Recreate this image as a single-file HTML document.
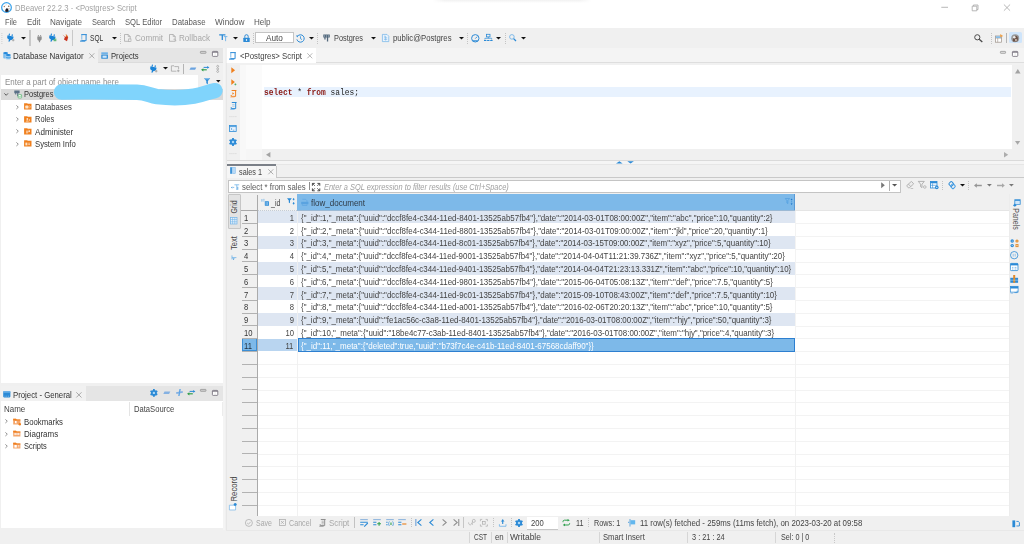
<!DOCTYPE html>
<html lang="en"><head><meta charset="utf-8"><title>DBeaver 22.2.3 - &lt;Postgres&gt; Script</title>
<style>
html,body{margin:0;padding:0}
body{width:1024px;height:544px;overflow:hidden;background:#f0f0f0;position:relative;font-family:"Liberation Sans", sans-serif;font-size:9px;line-height:10px}
body>div,body>svg,body>span{position:absolute}
.t{white-space:pre;transform-origin:0 50%}
svg{overflow:visible}
</style></head>
<body>
<div style="left:0px;top:0px;width:1024px;height:28.2px;background:#fff;"></div>
<div style="left:432px;top:0;width:160px;height:3px;background:linear-gradient(180deg,#f1f1f1,#fff);-webkit-mask-image:linear-gradient(90deg,transparent,#000 8%,#000 92%,transparent);mask-image:linear-gradient(90deg,transparent,#000 8%,#000 92%,transparent)"></div>
<svg style="left:0.9px;top:1.8px" width="11" height="11" viewBox="0 0 11 11"><circle cx="5.500" cy="5.500" r="4.850" fill="#fff" stroke="#3aa2ea" stroke-width="1.250"/><path d="M4.100 9.600C4.300 7.600 4.900 6.300 5.900 6.300C7 6.300 7.600 7.700 7.700 9.600C6.600 10.200 5.200 10.200 4.100 9.600Z" fill="#1d1a24"/><circle cx="3.300" cy="4.500" r=".7" fill="#a0785a"/><circle cx="7.700" cy="4.200" r=".8" fill="#8a6a55"/><circle cx="8" cy="6.700" r=".5" fill="#8a6a55"/><path d="M4.600 3.200l.8-.5" stroke="#b59a86" stroke-width=".6"/></svg>
<span class="t" style="left:14.7px;top:2.6px;color:#a3a3a3;transform:scaleX(0.856);">DBeaver 22.2.3 - &lt;Postgres&gt; Script</span>
<svg style="left:941px;top:4px" width="70" height="8" viewBox="0 0 70 8"><g fill="none" stroke="#a6a6a6" stroke-width=".8"><path d="M.3 3.3H7"/><path d="M31.2 2.2h4.6v4.6h-4.6zM32.4 2.2V1h4.6v4.6h-1.2"/><path d="M62.9.5l6.2 6.2M69.1.5l-6.2 6.2"/></g></svg>
<span class="t" style="left:4.9px;top:16.7px;color:#5a5a5a;transform:scaleX(0.827);">File</span>
<span class="t" style="left:26.5px;top:16.7px;color:#5a5a5a;transform:scaleX(0.870);">Edit</span>
<span class="t" style="left:50px;top:16.7px;color:#5a5a5a;transform:scaleX(0.901);">Navigate</span>
<span class="t" style="left:91.5px;top:16.7px;color:#5a5a5a;transform:scaleX(0.824);">Search</span>
<span class="t" style="left:124.75px;top:16.7px;color:#5a5a5a;transform:scaleX(0.850);">SQL Editor</span>
<span class="t" style="left:171.9px;top:16.7px;color:#5a5a5a;transform:scaleX(0.869);">Database</span>
<span class="t" style="left:215px;top:16.7px;color:#5a5a5a;transform:scaleX(0.918);">Window</span>
<span class="t" style="left:254px;top:16.7px;color:#5a5a5a;transform:scaleX(0.897);">Help</span>
<div style="left:0.8px;top:33px;width:0;height:10.5px;border-left:1px dotted #dcdcdc"></div>
<div style="left:2.2px;top:33px;width:0;height:10.5px;border-left:1px dotted #e4e4e4"></div>
<svg style="left:7.2px;top:33.8px" width="7.2" height="8" viewBox="0 0 7.2 8"><g transform="rotate(14 3.4 4)"><path d="M1.500 0V2M4.500 0V2" stroke="#1b84d8" stroke-width="1.100"/><path d="M0 1.900H6.200V3.500C6.200 4.800 5.100 5.600 4 5.900L3.300 8H2.300L2.400 5.900C1.100 5.600 0 4.800 0 3.500Z" fill="#1b84d8"/></g><path d="M4.900 6.100H7.500M6.200 4.800V7.400" stroke="#9a9a9a" stroke-width=".8"/></svg>
<svg style="left:21.1px;top:36.8px" width="5.0" height="2.6" viewBox="0 0 5.0 2.6"><path d="M0 0H5.0L2.5 2.6Z" fill="#111"/></svg>
<div style="left:29.4px;top:30.3px;width:1.3px;height:15.3px;background:#c9c9c9;"></div>
<svg style="left:37.3px;top:34.6px" width="5" height="7.2" viewBox="0 0 5 7.2"><path d="M1.4 0v1.5M3.6 0v1.5" stroke="#8e8e8e" stroke-width=".9"/><path d="M.3 1.5h4.4v2.2c0 1.1-.8 1.9-1.6 2v1.5H1.9V5.7C1 5.6.3 4.8.3 3.7Z" fill="#8e8e8e"/></svg>
<svg style="left:48.8px;top:33.8px" width="7.2" height="8" viewBox="0 0 7.2 8"><g transform="rotate(14 3.4 4)"><path d="M1.500 0V2M4.500 0V2" stroke="#1b84d8" stroke-width="1.100"/><path d="M0 1.900H6.200V3.500C6.200 4.800 5.100 5.600 4 5.900L3.300 8H2.300L2.400 5.900C1.100 5.600 0 4.800 0 3.500Z" fill="#1b84d8"/></g><path d="M4.600 5.200H7.400M4.600 6.700H7.400" stroke="#2fa04e" stroke-width=".9"/></svg>
<svg style="left:61.8px;top:34.4px" width="6.6" height="7.4" viewBox="0 0 6.6 7.4"><path d="M.4.6l2.500 2.500L2 5.400 5 7.200 6.200 3.300 4.600.2 3.600 2.900Z" fill="#c8321e"/><path d="M3.800.6l1.700 2.600" stroke="#f0a030" stroke-width=".8"/></svg>
<div style="left:71.9px;top:30.3px;width:1.3px;height:15.3px;background:#c9c9c9;"></div>
<svg style="left:80px;top:34px" width="7.4" height="7.8" viewBox="0 0 7.4 7.8"><path d="M1.800 .500V5.600" stroke="#6fb2e8" stroke-width=".9"/><path d="M1.300.600H6.800M6.100.600V6.700H1.400" fill="none" stroke="#2b8ad6" stroke-width="1"/><path d="M0 7.100H5" stroke="#2b8ad6" stroke-width="1"/></svg>
<span class="t" style="left:90.25px;top:33.2px;color:#333;transform:scaleX(0.735);">SQL</span>
<svg style="left:111.9px;top:36.8px" width="5.0" height="2.6" viewBox="0 0 5.0 2.6"><path d="M0 0H5.0L2.5 2.6Z" fill="#111"/></svg>
<div style="left:120.2px;top:33px;width:0;height:10.5px;border-left:1px dotted #c4c4c4"></div>
<svg style="left:124.4px;top:34.2px" width="8" height="7.8" viewBox="0 0 8 7.8"><path d="M.5.5H4.200L6.200 2.500V7.300H.5Z" fill="none" stroke="#a9a9a9" stroke-width=".8"/><path d="M4.200.5V2.500H6.200" fill="none" stroke="#a9a9a9" stroke-width=".7"/><rect x="4.600" y="5" width="2.400" height="2.600" fill="#f0f0f0" stroke="#a9a9a9" stroke-width=".6"/></svg>
<span class="t" style="left:134.75px;top:33.2px;color:#a8a8a8;transform:scaleX(0.903);">Commit</span>
<svg style="left:169.4px;top:34.2px" width="8" height="7.8" viewBox="0 0 8 7.8"><path d="M.5.5H4.200L6.200 2.500V7.300H.5Z" fill="none" stroke="#a9a9a9" stroke-width=".8"/><path d="M4.200.5V2.500H6.200" fill="none" stroke="#a9a9a9" stroke-width=".7"/><path d="M4.400 5.300c1.400-.6 2.600.3 2.400 1.900" fill="none" stroke="#a9a9a9" stroke-width=".7"/></svg>
<span class="t" style="left:178.75px;top:33.2px;color:#a8a8a8;transform:scaleX(0.898);">Rollback</span>
<svg style="left:218.6px;top:34.3px" width="8.6" height="7.6" viewBox="0 0 8.6 7.6"><path d="M.2.800H6.400M3.300.800V6" stroke="#2b8ad6" stroke-width="1.300"/><path d="M4.800 2.600H8.400M6.600 2.600V7.200" stroke="#6fb2e8" stroke-width=".9"/></svg>
<svg style="left:232.5px;top:36.8px" width="5.0" height="2.6" viewBox="0 0 5.0 2.6"><path d="M0 0H5.0L2.5 2.6Z" fill="#111"/></svg>
<svg style="left:243px;top:33.6px" width="7" height="8.4" viewBox="0 0 7 8.4"><path d="M1.800 3.800V2.400a1.700 1.700 0 0 1 3.400 0V3.800" fill="none" stroke="#2b8ad6" stroke-width="1"/><rect x=".3" y="3.700" width="6.400" height="4.400" rx=".6" fill="#2b8ad6"/><rect x="2.900" y="5.200" width="1.200" height="1.600" fill="#fff"/></svg>
<div style="left:253.2px;top:33px;width:0;height:10.5px;border-left:1px dotted #c4c4c4"></div>
<div style="left:255.3px;top:32.3px;width:38.5px;height:11.2px;background:#fff;border:.8px solid #c4c4c4;box-sizing:border-box"></div>
<span class="t" style="left:266.25px;top:33.2px;color:#444;transform:scaleX(0.910);">Auto</span>
<svg style="left:296.4px;top:33.8px" width="8.6" height="8.6" viewBox="0 0 8.6 8.6"><path d="M1.500 2.300A3.700 3.700 0 1 1 .9 5.400" fill="none" stroke="#2b8ad6" stroke-width="1"/><path d="M0 1.400l2.400.1L1.300 3.600Z" fill="#2b8ad6"/><path d="M4.500 2.300V4.600L6 5.600" fill="none" stroke="#2b8ad6" stroke-width=".8"/></svg>
<svg style="left:308.7px;top:36.8px" width="5.0" height="2.6" viewBox="0 0 5.0 2.6"><path d="M0 0H5.0L2.5 2.6Z" fill="#111"/></svg>
<div style="left:317.2px;top:33px;width:0;height:10.5px;border-left:1px dotted #c4c4c4"></div>
<svg style="left:323.4px;top:34px" width="7.2" height="8" viewBox="0 0 7.2 8"><path d="M.3.400H6.800V3.600H5.200V7.600H3.900V3.600H2.600V5.400H1.300V3.600H.3Z" fill="#53687c"/><path d="M1.500 1.200v1.600M3.500 1.200v1.600M5.500 1.200v1.600" stroke="#c9d6e2" stroke-width=".5"/></svg>
<span class="t" style="left:333.75px;top:33.2px;color:#444;transform:scaleX(0.816);">Postgres</span>
<svg style="left:370.6px;top:36.8px" width="5.0" height="2.6" viewBox="0 0 5.0 2.6"><path d="M0 0H5.0L2.5 2.6Z" fill="#111"/></svg>
<svg style="left:382.4px;top:34px" width="7.2" height="8" viewBox="0 0 7.2 8"><path d="M.4.400H5L6.800 2.200V7.600H.4Z" fill="#eaf3fc" stroke="#6fb2e8" stroke-width=".7"/><path d="M2 2.200h1.600M2 3.800h3.200M2 5.400h3.200M3.600 2.200v4.400" stroke="#6fb2e8" stroke-width=".6"/></svg>
<span class="t" style="left:392.75px;top:33.2px;color:#444;transform:scaleX(0.858);">public@Postgres</span>
<svg style="left:459.0px;top:36.8px" width="5.0" height="2.6" viewBox="0 0 5.0 2.6"><path d="M0 0H5.0L2.5 2.6Z" fill="#111"/></svg>
<div style="left:467.2px;top:33px;width:0;height:10.5px;border-left:1px dotted #c4c4c4"></div>
<svg style="left:471px;top:34px" width="8.6" height="8.4" viewBox="0 0 8.6 8.4"><circle cx="4.300" cy="4.300" r="3.700" fill="none" stroke="#2b8ad6" stroke-width="1"/><path d="M4.300 4.600L6.200 2.600" stroke="#2b8ad6" stroke-width=".9"/><path d="M1.800 6.800H6.800" stroke="#2b8ad6" stroke-width="1"/></svg>
<svg style="left:483.6px;top:34.3px" width="8.6" height="7.2" viewBox="0 0 8.6 7.2"><rect x="2.600" y=".3" width="3.400" height="2.600" fill="none" stroke="#2b8ad6" stroke-width=".8"/><path d="M4.300 2.900V4.300M.9 5.600V4.300H7.700V5.600" fill="none" stroke="#2b8ad6" stroke-width=".7"/><path d="M0 6.500H2.400M3.100 6.500H5.500M6.200 6.500H8.600" stroke="#2b8ad6" stroke-width="1.100"/></svg>
<svg style="left:496.4px;top:36.8px" width="5.0" height="2.6" viewBox="0 0 5.0 2.6"><path d="M0 0H5.0L2.5 2.6Z" fill="#111"/></svg>
<div style="left:505px;top:33px;width:0;height:10.5px;border-left:1px dotted #c4c4c4"></div>
<svg style="left:509.3px;top:34.2px" width="7.6" height="7.6" viewBox="0 0 7.6 7.6"><circle cx="2.900" cy="2.900" r="2.300" fill="none" stroke="#6fb2e8" stroke-width=".9"/><path d="M4.600 4.600L7 7" stroke="#2b8ad6" stroke-width="1.300"/></svg>
<svg style="left:521.4px;top:36.8px" width="5.0" height="2.6" viewBox="0 0 5.0 2.6"><path d="M0 0H5.0L2.5 2.6Z" fill="#111"/></svg>
<svg style="left:974px;top:33.8px" width="9" height="8.6" viewBox="0 0 9 8.6"><circle cx="3.300" cy="3.300" r="2.600" fill="none" stroke="#4a4a4a" stroke-width="1"/><path d="M5.200 5.200L8.300 8.100" stroke="#4a4a4a" stroke-width="1.300"/></svg>
<div style="left:991.2px;top:33px;width:0;height:10.5px;border-left:1px dotted #c4c4c4"></div>
<svg style="left:995px;top:33.6px" width="8.4" height="8.6" viewBox="0 0 8.4 8.6"><rect x=".4" y="2" width="6.200" height="6.200" fill="#fff" stroke="#9a8f86" stroke-width=".7"/><path d="M.4 4.100H6.600M2.700 4.100V8.200" stroke="#9a8f86" stroke-width=".6"/><rect x=".8" y="2.400" width="5.400" height="1.400" fill="#6fb2e8"/><path d="M5.200 0l3 2-3 1.500Z" fill="#f0a24a"/></svg>
<div style="left:1006.1px;top:33px;width:1.0px;height:10px;background:#b4b4b4;"></div>
<div style="left:1009.1px;top:32.3px;width:12.6px;height:10.9px;background:#cfe5fb;border-radius:1.500px"></div>
<svg style="left:1011.3px;top:33.8px" width="8.4" height="8.4" viewBox="0 0 8.4 8.4"><circle cx="4.200" cy="4.200" r="4" fill="#9a9a9a"/><path d="M2 7.400C1.600 5 2.300 2 4.400 1.800c1.900-.1 2.700 1.600 2.500 3.100-.1 1.100-.4 1.800-.7 2.600Z" fill="#6a5248"/><circle cx="3.300" cy="3.300" r="1.300" fill="#e9e9e9"/><path d="M4.100 5.200h1.700v1.500h-1.700z" fill="#e4d9cf"/></svg>
<div style="left:0.8px;top:47.5px;width:222.6px;height:335.1px;background:#f0f0f0;"></div>
<div style="left:98px;top:47.8px;width:125.2px;height:14.5px;background:#e5e5e5;border-top-left-radius:3px"></div>
<div style="left:98px;top:62px;width:125.2px;height:0.6px;background:#dcdcdc;"></div>
<svg style="left:3px;top:51.6px" width="8" height="7.6" viewBox="0 0 8 7.6"><g><rect x=".2" y="1" width="4.800" height="5.400" rx="1" fill="#7dbdee"/><ellipse cx="2.600" cy="1.100" rx="2.400" ry="1" fill="#1f86da"/><rect x="2.800" y="2.900" width="5" height="4.500" rx="1" fill="#8cc6f0" stroke="#f0f0f0" stroke-width=".4"/><ellipse cx="5.300" cy="3" rx="2.500" ry="1" fill="#1f86da"/><path d="M2.800 5.300C4 6 6.600 6 7.800 5.300" fill="none" stroke="#1f86da" stroke-width=".6"/></g></svg>
<span class="t" style="left:13.1px;top:50.6px;color:#333;transform:scaleX(0.888);">Database Navigator</span>
<svg style="left:88.8px;top:52.8px" width="5.6" height="5.6" viewBox="0 0 5.6 5.6"><path d="M.3.300L5.300 5.300M5.300.300L.3 5.300" stroke="#909090" stroke-width=".7"/></svg>
<svg style="left:100.6px;top:51.9px" width="7.2" height="7" viewBox="0 0 7.2 7"><rect x=".3" y=".3" width="6.600" height="1.700" fill="#6fb2e8"/><rect x=".3" y="2.500" width="6.600" height="4.200" fill="#2b8ad6"/><rect x="1.500" y="3.600" width="4.200" height="2.200" fill="#cfe6fa"/></svg>
<span class="t" style="left:110.6px;top:50.6px;color:#333;transform:scaleX(0.852);">Projects</span>
<svg style="left:200px;top:51.2px" width="6.4" height="3" viewBox="0 0 6.4 3"><rect x=".4" y=".4" width="5.600" height="1.900" rx=".5" fill="#d8d8d8" stroke="#8a8a8a" stroke-width=".7"/></svg>
<svg style="left:212.4px;top:51px" width="6.2" height="5.8" viewBox="0 0 6.2 5.8"><rect x=".4" y=".4" width="5.400" height="5" rx=".8" fill="#fff" stroke="#6b6672" stroke-width=".8"/><path d="M.4 1.300H5.800" stroke="#6b6672" stroke-width=".8"/><path d="M3.100 1.700V5.400" stroke="#d8d8d8" stroke-width=".5"/></svg>
<svg style="left:150.2px;top:64.6px" width="7.2" height="8" viewBox="0 0 7.2 8"><g transform="rotate(14 3.4 4)"><path d="M1.500 0V2M4.500 0V2" stroke="#1b84d8" stroke-width="1.100"/><path d="M0 1.900H6.200V3.500C6.200 4.800 5.100 5.600 4 5.900L3.300 8H2.300L2.400 5.900C1.100 5.600 0 4.800 0 3.500Z" fill="#1b84d8"/></g><path d="M4.900 6.100H7.500M6.200 4.800V7.400" stroke="#9a9a9a" stroke-width=".8"/></svg>
<svg style="left:162.5px;top:67.3px" width="5.0" height="2.6" viewBox="0 0 5.0 2.6"><path d="M0 0H5.0L2.5 2.6Z" fill="#111"/></svg>
<svg style="left:171.2px;top:65px" width="9" height="7" viewBox="0 0 9 7"><path d="M.4 6.200V.800H3L3.800 1.600H7.600V4" fill="none" stroke="#9c9c9c" stroke-width=".7"/><path d="M.4 6.200H5.400" stroke="#9c9c9c" stroke-width=".7"/><path d="M6 5.800H8.600M7.300 4.500V7.100" stroke="#9c9c9c" stroke-width=".7"/></svg>
<div style="left:183.3px;top:64px;width:1.0px;height:9.5px;background:#b4b4b4;"></div>
<svg style="left:188.7px;top:66.6px" width="7.6" height="3.2" viewBox="0 0 7.6 3.2"><path d="M.5 2.800L1.700.400H7.300L6.100 2.800Z" fill="#6aa3e0"/></svg>
<svg style="left:200.6px;top:66.2px" width="8.4" height="5.2" viewBox="0 0 8.4 5.2"><path d="M2.600 1.400H7.200" stroke="#2b8ad6" stroke-width="1"/><path d="M6.200 0L8.400 1.400 6.200 2.800Z" fill="#2b8ad6"/><path d="M1.200 3.800H5.800" stroke="#36a04e" stroke-width="1.200"/><path d="M2.400 2.200L0 3.800 2.400 5.400Z" fill="#36a04e"/></svg>
<svg style="left:215.6px;top:65.3px" width="3.4" height="7.8" viewBox="0 0 3.4 7.8"><g fill="#fff" stroke="#8a8a8a" stroke-width=".6"><circle cx="1.700" cy="1.300" r=".95"/><circle cx="1.700" cy="3.900" r=".95"/><circle cx="1.700" cy="6.500" r=".95"/></g></svg>
<div style="left:1.1px;top:75px;width:196.5px;height:13.6px;background:#fff;"></div>
<div style="left:1.8px;top:88.5px;width:198.2px;height:0.6px;background:#b3b3b3;"></div>
<span class="t" style="left:4.6px;top:76.6px;color:#8c8c8c;transform:scaleX(0.882);">Enter a part of object name here</span>
<svg style="left:203.7px;top:77.9px" width="6.4" height="6.4" viewBox="0 0 6.4 6.4"><path d="M0 .2H6.200L3.900 3V6.200L2.300 5.200V3Z" fill="#2b8ad6"/><path d="M1 .9H5.200" stroke="#bfe0f8" stroke-width=".6"/></svg>
<svg style="left:216.1px;top:80.4px" width="4.6" height="2.4" viewBox="0 0 4.6 2.4"><path d="M0 0H4.6L2.3 2.4Z" fill="#111"/></svg>
<div style="left:0.8px;top:88.9px;width:222.6px;height:11.0px;background:#d9d9d9;"></div>
<div style="left:0.8px;top:99.9px;width:222.6px;height:282.7px;background:#fff;"></div>
<svg style="left:4.2px;top:93px" width="4.4" height="3" viewBox="0 0 4.4 3"><path d="M.4.400L2.200 2.300 4 .4" fill="none" stroke="#4a4a4a" stroke-width=".9"/></svg>
<svg style="left:13.7px;top:90.4px" width="7.8" height="8.4" viewBox="0 0 7.8 8.4"><path d="M.3.400H5.600V3.200H4.300V6.200H3.200V3.200H2.200V4.600H1.200V3.200H.3Z" fill="#5a7087"/><rect x="4.200" y="4.600" width="3.400" height="3.400" rx=".5" fill="#fff" stroke="#3aa655" stroke-width=".6"/><path d="M4.900 6.300l.8.800 1.300-1.600" fill="none" stroke="#3aa655" stroke-width=".6"/></svg>
<span class="t" style="left:24px;top:89.4px;color:#333;transform:scaleX(0.830);">Postgres</span>
<svg style="left:0px;top:0px" width="230" height="110" viewBox="0 0 230 110"><path d="M61.500 92C85 91.700 115 91.900 137 92.300C146 92.600 150 95.600 157 96.600C167 97.800 183 98 194 96.200C203 94.800 208 91.800 215 90.600" fill="none" stroke="#80d4fc" stroke-width="15.400" stroke-linecap="round" stroke-linejoin="round"/></svg>
<svg style="left:16.2px;top:104.8px" width="2.8" height="4.4" viewBox="0 0 2.8 4.4"><path d="M.4.400L2.300 2.200.4 4" fill="none" stroke="#858585" stroke-width=".9"/></svg>
<svg style="left:24px;top:103.4px" width="7.6" height="6.8" viewBox="0 0 7.6 6.8"><path d="M.1.200H3.200L3.800.800H7.500V6.500H.1Z" fill="#f0801e"/><rect x="1.300" y="2.600" width="3.200" height="2.900" rx=".6" fill="#fde3c8"/><path d="M5.300 2.800L6.500 3.900 5.300 5" fill="none" stroke="#fff" stroke-width=".6"/></svg>
<span class="t" style="left:34.75px;top:102.0px;color:#333;transform:scaleX(0.856);">Databases</span>
<svg style="left:16.2px;top:117.05px" width="2.8" height="4.4" viewBox="0 0 2.8 4.4"><path d="M.4.400L2.300 2.200.4 4" fill="none" stroke="#858585" stroke-width=".9"/></svg>
<svg style="left:24px;top:115.65px" width="7.6" height="6.8" viewBox="0 0 7.6 6.8"><path d="M.1.200H3.200L3.800.800H7.500V6.500H.1Z" fill="#f0801e"/><circle cx="3.300" cy="3" r=".9" fill="#fde3c8"/><path d="M1.700 5.600c.2-1.600 3-1.600 3.200 0Z" fill="#fde3c8"/><path d="M5.400 3v2.200" stroke="#fff" stroke-width=".5"/></svg>
<span class="t" style="left:34.75px;top:114.25px;color:#333;transform:scaleX(0.832);">Roles</span>
<svg style="left:16.2px;top:129.3px" width="2.8" height="4.4" viewBox="0 0 2.8 4.4"><path d="M.4.400L2.300 2.200.4 4" fill="none" stroke="#858585" stroke-width=".9"/></svg>
<svg style="left:24px;top:127.9px" width="7.6" height="6.8" viewBox="0 0 7.6 6.8"><path d="M.1.200H3.200L3.800.800H7.500V6.500H.1Z" fill="#f0801e"/><path d="M2 3.200H5.400M2 4.800H4M4.800 2.200L6 3.200 4.800 4.200" fill="none" stroke="#fff" stroke-width=".7"/></svg>
<span class="t" style="left:34.75px;top:126.5px;color:#333;transform:scaleX(0.900);">Administer</span>
<svg style="left:16.2px;top:141.55px" width="2.8" height="4.4" viewBox="0 0 2.8 4.4"><path d="M.4.400L2.300 2.200.4 4" fill="none" stroke="#858585" stroke-width=".9"/></svg>
<svg style="left:24px;top:140.15px" width="7.6" height="6.8" viewBox="0 0 7.6 6.8"><path d="M.1.200H3.200L3.800.800H7.500V6.500H.1Z" fill="#f0801e"/><rect x="1.400" y="2.600" width="2" height="2.800" fill="#fde3c8"/><path d="M4.200 3.200H6M4.200 4.600H6" stroke="#fff" stroke-width=".6"/></svg>
<span class="t" style="left:34.75px;top:138.75px;color:#333;transform:scaleX(0.857);">System Info</span>
<div style="left:0.8px;top:385.7px;width:222.6px;height:142.7px;background:#fff;"></div>
<div style="left:0.8px;top:385.7px;width:222.6px;height:15.6px;background:#e5e5e5;"></div>
<div style="left:0.8px;top:385.7px;width:85.2px;height:15.6px;background:#f1f1f1;"></div>
<svg style="left:3.1px;top:390.6px" width="7.6" height="6.6" viewBox="0 0 7.6 6.6"><rect x=".2" y=".2" width="7.200" height="6.200" rx=".8" fill="#2b8ad6"/><rect x=".2" y=".2" width="7.200" height="1.500" fill="#6fb2e8"/><path d="M1.600 5.200h.8M3.400 5.200h.8M5.200 5.200h.8" stroke="#cfe6fa" stroke-width=".6"/></svg>
<span class="t" style="left:13.4px;top:389.9px;color:#333;transform:scaleX(0.865);">Project - General</span>
<svg style="left:76.4px;top:391.6px" width="5.8" height="5.8" viewBox="0 0 5.8 5.8"><path d="M.3.300L5.500 5.500M5.500.300L.3 5.500" stroke="#8a8a8a" stroke-width=".7"/></svg>
<svg style="left:150.1px;top:388.6px" width="7.8" height="7.8" viewBox="0 0 8 8"><g transform="translate(4 4)" fill="#2b8ad6"><rect x="-.9" y="-4" width="1.800" height="2" transform="rotate(0)"/><rect x="-.9" y="-4" width="1.800" height="2" transform="rotate(60)"/><rect x="-.9" y="-4" width="1.800" height="2" transform="rotate(120)"/><rect x="-.9" y="-4" width="1.800" height="2" transform="rotate(180)"/><rect x="-.9" y="-4" width="1.800" height="2" transform="rotate(240)"/><rect x="-.9" y="-4" width="1.800" height="2" transform="rotate(300)"/><circle r="3"/></g><circle cx="4" cy="4" r="1.250" fill="#a9d6f7"/></svg>
<svg style="left:163px;top:391px" width="7.6" height="3.2" viewBox="0 0 7.6 3.2"><path d="M.3 2.900L1.500.400H7.300L6.100 2.900Z" fill="#85b1e2"/></svg>
<svg style="left:176px;top:389px" width="7" height="7" viewBox="0 0 7 7"><path d="M.2 4.200L6.800 2.800" stroke="#85b1e2" stroke-width="1.700"/><path d="M4.100 0L2.900 7" stroke="#5fa5e6" stroke-width="1.400"/></svg>
<svg style="left:187px;top:389.8px" width="8.4" height="5.2" viewBox="0 0 8.4 5.2"><path d="M2.600 1.400H7.200" stroke="#2b8ad6" stroke-width="1"/><path d="M6.200 0L8.400 1.400 6.200 2.800Z" fill="#2b8ad6"/><path d="M1.200 3.800H5.800" stroke="#36a04e" stroke-width="1.200"/><path d="M2.400 2.200L0 3.800 2.400 5.400Z" fill="#36a04e"/></svg>
<svg style="left:200px;top:389.2px" width="6.4" height="3" viewBox="0 0 6.4 3"><rect x=".4" y=".4" width="5.600" height="1.900" rx=".5" fill="#d0d0d0" stroke="#8a8a8a" stroke-width=".7"/></svg>
<svg style="left:212.4px;top:389.6px" width="6.2" height="5.8" viewBox="0 0 6.2 5.8"><rect x=".4" y=".4" width="5.400" height="5" rx=".8" fill="#fff" stroke="#6b6672" stroke-width=".8"/><path d="M.4 1.300H5.800" stroke="#6b6672" stroke-width=".8"/><path d="M3.100 1.700V5.400" stroke="#d8d8d8" stroke-width=".5"/></svg>
<span class="t" style="left:3.75px;top:404.0px;color:#444;transform:scaleX(0.885);">Name</span>
<div style="left:129.4px;top:401.5px;width:1.0px;height:14.0px;background:#e4e4e4;"></div>
<div style="left:221.5px;top:401.5px;width:1.0px;height:14.0px;background:#ececec;"></div>
<span class="t" style="left:133.75px;top:404.0px;color:#444;transform:scaleX(0.847);">DataSource</span>
<svg style="left:4.6px;top:419.3px" width="2.8" height="4.4" viewBox="0 0 2.8 4.4"><path d="M.4.400L2.300 2.200.4 4" fill="none" stroke="#858585" stroke-width=".9"/></svg>
<svg style="left:12.5px;top:417.6px" width="8.2" height="7.6" viewBox="0 0 8.2 7.6"><path d="M.2.800H3L3.700 1.600H7.400V6.600H.2Z" fill="#f4a56a"/><path d="M.2.800H3L3.700 1.600H7.400V2.400H.2Z" fill="#f0801e"/><path d="M2 3h1.600v2.600l-.8-.6-.8.600Z" fill="#fff"/><circle cx="6.800" cy="6.300" r="1.200" fill="#f0801e"/></svg>
<span class="t" style="left:24px;top:416.5px;color:#333;transform:scaleX(0.866);">Bookmarks</span>
<svg style="left:4.6px;top:431.55px" width="2.8" height="4.4" viewBox="0 0 2.8 4.4"><path d="M.4.400L2.300 2.200.4 4" fill="none" stroke="#858585" stroke-width=".9"/></svg>
<svg style="left:12.5px;top:429.85px" width="8.2" height="7.6" viewBox="0 0 8.2 7.6"><path d="M.2.800H3L3.700 1.600H7.400V6.600H.2Z" fill="#f4a56a"/><path d="M.2.800H3L3.700 1.600H7.400V2.400H.2Z" fill="#f0801e"/><path d="M1.600 3.400h1.800v1.200H1.600zM4.600 3.400h1.600v1.200H4.600zM3.400 4h1.200" fill="#fff" stroke="#fff" stroke-width=".4"/></svg>
<span class="t" style="left:24px;top:428.75px;color:#333;transform:scaleX(0.888);">Diagrams</span>
<svg style="left:4.6px;top:443.8px" width="2.8" height="4.4" viewBox="0 0 2.8 4.4"><path d="M.4.400L2.300 2.200.4 4" fill="none" stroke="#858585" stroke-width=".9"/></svg>
<svg style="left:12.5px;top:442.1px" width="8.2" height="7.6" viewBox="0 0 8.2 7.6"><path d="M.2.800H3L3.700 1.600H7.400V6.600H.2Z" fill="#f4a56a"/><path d="M.2.800H3L3.700 1.600H7.400V2.400H.2Z" fill="#f0801e"/><rect x="1.400" y="3" width="2.400" height="2.600" fill="#fff"/><path d="M4.800 3.600H6.400M4.800 4.800H6.400" stroke="#fff" stroke-width=".6"/></svg>
<span class="t" style="left:24px;top:441.0px;color:#333;transform:scaleX(0.829);">Scripts</span>
<div style="left:226.9px;top:47.5px;width:797.1px;height:14.5px;background:#f4f4f4;"></div>
<div style="left:226.9px;top:61.8px;width:797.1px;height:0.8px;background:#dedede;"></div>
<div style="left:226.9px;top:62.6px;width:797.1px;height:2.7px;background:#f1f1f1;"></div>
<div style="left:223.2px;top:47.5px;width:1.6px;height:482.5px;background:#f4f4f4;"></div>
<div style="left:226.2px;top:62.6px;width:0.7px;height:467.4px;background:#e7e7e7;"></div>
<div style="left:226.9px;top:47.8px;width:88.7px;height:14.9px;background:#fff;"></div>
<svg style="left:229.3px;top:51.6px" width="7.4" height="7.8" viewBox="0 0 7.4 7.8"><path d="M1.800 .500V5.600" stroke="#6fb2e8" stroke-width=".9"/><path d="M1.300.600H6.800M6.100.600V6.700H1.400" fill="none" stroke="#2b8ad6" stroke-width="1"/><path d="M0 7.100H5" stroke="#2b8ad6" stroke-width="1"/></svg>
<span class="t" style="left:239.5px;top:50.6px;color:#444;transform:scaleX(0.867);">&lt;Postgres&gt; Script</span>
<svg style="left:306.5px;top:52.8px" width="5.6" height="5.6" viewBox="0 0 5.6 5.6"><path d="M.3.300L5.300 5.300M5.300.300L.3 5.300" stroke="#9a9a9a" stroke-width=".7"/></svg>
<svg style="left:1000.4px;top:51.2px" width="6.4" height="3" viewBox="0 0 6.4 3"><rect x=".4" y=".4" width="5.200" height="1.900" rx=".5" fill="#e4e4e4" stroke="#8a8a8a" stroke-width=".7"/></svg>
<svg style="left:1012.2px;top:51px" width="6.2" height="5.8" viewBox="0 0 6.2 5.8"><rect x=".4" y=".4" width="5.400" height="5" rx=".8" fill="#fff" stroke="#6b6672" stroke-width=".8"/><path d="M.4 1.300H5.800" stroke="#6b6672" stroke-width=".8"/><path d="M3.100 1.700V5.400" stroke="#d8d8d8" stroke-width=".5"/></svg>
<div style="left:226.9px;top:65.3px;width:13.1px;height:95.1px;background:#f0f0f0;"></div>
<div style="left:240px;top:65.3px;width:5.8px;height:95.1px;background:#f8f8f8;"></div>
<div style="left:245.8px;top:65.3px;width:766.5px;height:83.7px;background:#fff;"></div>
<div style="left:245.8px;top:149px;width:16.7px;height:11.4px;background:#f6f6f6;"></div>
<div style="left:245.8px;top:65.3px;width:16.6px;height:83.7px;background:#fbfbfb;"></div>
<div style="left:263.75px;top:87px;width:747.55px;height:10.3px;background:#e8f2fe;"></div>
<span class="t" style="left:264px;top:88.25px;color:#222;font-size:8.6px;font-family:'Liberation Mono', monospace;transform:scaleX(0.920);"><b style="color:#8a1a14">select</b> * <b style="color:#8a1a14">from</b> sales;</span>
<svg style="left:231px;top:67.2px" width="4.4" height="6.4" viewBox="0 0 4.4 6.4"><path d="M.3.200L4.100 3.200.3 6.200Z" fill="#f0801e"/></svg>
<svg style="left:231px;top:79px" width="5.4" height="6.6" viewBox="0 0 5.4 6.6"><path d="M.3.200L3.900 3.100.3 6Z" fill="#f0801e"/><path d="M3.400 5.400H5.400M4.400 4.400V6.400" stroke="#3aa655" stroke-width=".7"/></svg>
<svg style="left:229.7px;top:90px" width="7" height="7.6" viewBox="0 0 7 7.6"><path d="M1.600.5H6.400M5.600.5V6.400H1.200M1.200 6.400V5" fill="none" stroke="#f0801e" stroke-width="1"/><path d="M.3 7.100H4.600" stroke="#f6b27a" stroke-width=".8"/><path d="M2.400 2.200L4.200 3.500 2.400 4.800Z" fill="#f0801e"/></svg>
<svg style="left:229.7px;top:101.6px" width="7" height="8.2" viewBox="0 0 7 8.2"><path d="M1.800.5H6.600M5.700.5V6.600H1.200M1.200 6.600V5.200" fill="none" stroke="#2b8ad6" stroke-width="1"/><path d="M.3 7.400H4.600" stroke="#6fb2e8" stroke-width=".8"/><path d="M2.200 2.600h2.400M2.200 4.200h2.400" stroke="#6fb2e8" stroke-width=".6"/></svg>
<svg style="left:229px;top:116.4px" width="8" height="1.2" viewBox="0 0 8 1.2"><path d="M.6.600h.7M2.600.600h.7M4.600.600h.7M6.600.600h.7" stroke="#b8b8b8" stroke-width=".7"/></svg>
<svg style="left:229.4px;top:125px" width="7.6" height="7" viewBox="0 0 7.6 7"><rect x=".4" y=".4" width="6.800" height="6.200" fill="#eaf3fc" stroke="#2b8ad6" stroke-width=".8"/><path d="M.4 1.600H7.200" stroke="#2b8ad6" stroke-width=".8"/><path d="M1.800 3l1.300 1-1.300 1M3.800 5.200h1.600" fill="none" stroke="#2b8ad6" stroke-width=".6"/></svg>
<svg style="left:229px;top:137.8px" width="8" height="8" viewBox="0 0 8 8"><g transform="translate(4 4)" fill="#2b8ad6"><rect x="-.9" y="-4" width="1.800" height="2" transform="rotate(0)"/><rect x="-.9" y="-4" width="1.800" height="2" transform="rotate(60)"/><rect x="-.9" y="-4" width="1.800" height="2" transform="rotate(120)"/><rect x="-.9" y="-4" width="1.800" height="2" transform="rotate(180)"/><rect x="-.9" y="-4" width="1.800" height="2" transform="rotate(240)"/><rect x="-.9" y="-4" width="1.800" height="2" transform="rotate(300)"/><circle r="3"/></g><circle cx="4" cy="4" r="1.250" fill="#a9d6f7"/></svg>
<svg style="left:229px;top:152.6px" width="8" height="1.2" viewBox="0 0 8 1.2"><path d="M.6.600h.7M2.600.600h.7M4.600.600h.7M6.600.600h.7" stroke="#b8b8b8" stroke-width=".7"/></svg>
<svg style="left:1014.7px;top:68.5px" width="5.6" height="4.4" viewBox="0 0 5.6 4.4"><path d="M2.800 0L5.600 4.400H0Z" fill="#a3a3a3"/></svg>
<svg style="left:1014.9px;top:141.4px" width="5.2" height="3.8" viewBox="0 0 5.2 3.8"><path d="M0 0H5.200L2.600 3.800Z" fill="#a8a8a8"/></svg>
<svg style="left:265.6px;top:151.6px" width="4.4" height="5.6" viewBox="0 0 4.4 5.6"><path d="M4.400 0V5.600L0 2.800Z" fill="#a3a3a3"/></svg>
<svg style="left:1004px;top:151.6px" width="4.2" height="5.6" viewBox="0 0 4.2 5.6"><path d="M0 0V5.600L4.200 2.800Z" fill="#adadad"/></svg>
<div style="left:226.9px;top:160.3px;width:797.1px;height:0.8px;background:#dadada;"></div>
<div style="left:226.9px;top:161.1px;width:797.1px;height:3.3px;background:#f5f5f5;"></div>
<div style="left:226.9px;top:163.7px;width:797.1px;height:0.6px;background:#e6e6e6;"></div>
<svg style="left:616.2px;top:160.7px" width="18" height="3.2" viewBox="0 0 18 3.2"><path d="M0 2.600L3.300 .2 6.600 2.600Z" fill="#2b8ad6"/><path d="M11.300.300H17.900L14.600 2.400Z" fill="#2b8ad6"/></svg>
<div style="left:226.9px;top:164.6px;width:49.3px;height:13.4px;background:#f6f6f6;"></div>
<div style="left:226.9px;top:164.4px;width:49.1px;height:1.4px;background:#7b8088;"></div>
<div style="left:275.8px;top:166px;width:0.7px;height:12px;background:#c9c9c9;"></div>
<div style="left:275.8px;top:177.4px;width:748.2px;height:0.8px;background:#c9c9c9;"></div>
<svg style="left:230px;top:167.4px" width="5.8" height="7" viewBox="0 0 5.8 7"><rect x=".2" y=".2" width="1.700" height="6.600" fill="#2b8ad6"/><rect x="2.500" y=".2" width="3" height="6.600" fill="#b9d9f5" stroke="#6fb2e8" stroke-width=".4"/></svg>
<span class="t" style="left:239.4px;top:166.9px;color:#444;transform:scaleX(0.810);">sales 1</span>
<svg style="left:267.5px;top:169.2px" width="5.6" height="5.6" viewBox="0 0 5.6 5.6"><path d="M.3.300L5.300 5.300M5.300.300L.3 5.300" stroke="#909090" stroke-width=".7"/></svg>
<div style="left:228.4px;top:179.5px;width:673.0px;height:13.0px;background:#fff;border:1px solid #c4c4c4;box-sizing:border-box"></div>
<svg style="left:230.6px;top:183.6px" width="8.4" height="6.4" viewBox="0 0 8.4 6.4"><path d="M3.400.800H8.200M5.800.800V6" stroke="#6fb2e8" stroke-width=".8"/><path d="M0 3.400L1.400 2.400V4.400Z" fill="#2b8ad6"/><path d="M2.200 3.400h1M6.800 2.800v3" stroke="#2b8ad6" stroke-width=".7"/></svg>
<span class="t" style="left:242.25px;top:181.9px;color:#5a5a5a;transform:scaleX(0.867);">select * from sales</span>
<div style="left:309.2px;top:181.6px;width:0.7px;height:8.8px;background:#8c8c8c;"></div>
<svg style="left:311.9px;top:182.8px" width="8.2" height="8.2" viewBox="0 0 8.2 8.2"><g fill="none" stroke="#333" stroke-width=".9"><path d="M.4 2.800V.4H2.800M5.400.400H7.800V2.800M7.800 5.400V7.800H5.400M2.800 7.800H.4V5.400"/></g><path d="M.6.600L3 3M7.600.600L5.200 3M7.600 7.600L5.200 5.200M.6 7.600L3 5.200" stroke="#333" stroke-width=".7"/></svg>
<span class="t" style="left:323.5px;top:181.9px;color:#a0a0a0;font-style:italic;transform:scaleX(0.824);">Enter a SQL expression to filter results (use Ctrl+Space)</span>
<svg style="left:880.5px;top:182px" width="4" height="6.4" viewBox="0 0 4 6.4"><path d="M.2.200V6.200L3.800 3.200Z" fill="#777"/></svg>
<div style="left:889.4px;top:181.4px;width:0.7px;height:9.2px;background:#b0b0b0;"></div>
<svg style="left:892.1px;top:184.0px" width="5.2" height="2.6" viewBox="0 0 5.2 2.6"><path d="M0 0H5.2L2.6 2.6Z" fill="#555"/></svg>
<svg style="left:906px;top:181px" width="8" height="8" viewBox="0 0 8 8"><g transform="rotate(-42 4 3.800)"><rect x=".8" y="2.200" width="6.600" height="3.400" rx=".5" fill="#ececec" stroke="#a2a2a2" stroke-width=".7"/><path d="M3.300 2.200V5.600" stroke="#a2a2a2" stroke-width=".6"/></g><path d="M4.600 7.500H7.200" stroke="#a2a2a2" stroke-width=".6"/></svg>
<svg style="left:918px;top:181px" width="8.6" height="8" viewBox="0 0 8.6 8"><path d="M.3.400H6.300L4 3.200V6.600L2.600 5.600V3.200Z" fill="none" stroke="#9a9a9a" stroke-width=".7"/><circle cx="6.800" cy="6" r="1.300" fill="none" stroke="#9a9a9a" stroke-width=".6"/></svg>
<svg style="left:930px;top:181px" width="8.8" height="8.2" viewBox="0 0 8.8 8.2"><rect x=".4" y=".4" width="6.600" height="6.600" fill="#fff" stroke="#2b8ad6" stroke-width=".8"/><rect x=".4" y=".4" width="6.600" height="1.900" fill="#2b8ad6"/><path d="M.4 4.300H7M2.600 2.300V7" stroke="#2b8ad6" stroke-width=".6"/><circle cx="6.800" cy="6.400" r="1.800" fill="#2b8ad6"/><circle cx="6.800" cy="6.400" r=".7" fill="#cfe6fa"/></svg>
<div style="left:941.5px;top:180.6px;width:0;height:9.4px;border-left:1px dotted #c4c4c4"></div>
<svg style="left:947.6px;top:181px" width="8.2" height="8.2" viewBox="0 0 8.2 8.2"><g fill="none" stroke="#2b8ad6" stroke-width="1"><rect x="1.300" y="1" width="3.900" height="3.900" rx="1" transform="rotate(45 3.250 2.950)"/><rect x="3" y="3.300" width="3.900" height="3.900" rx="1" transform="rotate(45 4.950 5.250)" stroke="#4aa0e6"/></g></svg>
<svg style="left:960.0px;top:183.9px" width="5.0" height="2.6" viewBox="0 0 5.0 2.6"><path d="M0 0H5.0L2.5 2.6Z" fill="#111"/></svg>
<div style="left:968.3px;top:180.6px;width:0;height:9.4px;border-left:1px dotted #c4c4c4"></div>
<svg style="left:974.3px;top:182.6px" width="7.8" height="5" viewBox="0 0 7.8 5"><path d="M0 2.500L2.800.200V1.800H7.800V3.200H2.800V4.800Z" fill="#969696"/></svg>
<svg style="left:987.0px;top:183.95px" width="4.8" height="2.5" viewBox="0 0 4.8 2.5"><path d="M0 0H4.8L2.4 2.5Z" fill="#777"/></svg>
<svg style="left:996.6px;top:182.6px" width="7.8" height="5" viewBox="0 0 7.8 5"><path d="M7.800 2.500L5 .200V1.800H0V3.200H5V4.800Z" fill="#a8a8a8"/></svg>
<svg style="left:1009.1px;top:183.95px" width="4.8" height="2.5" viewBox="0 0 4.8 2.5"><path d="M0 0H4.8L2.4 2.5Z" fill="#777"/></svg>
<div style="left:241.4px;top:194px;width:767.6px;height:321.8px;background:#fff;"></div>
<div style="left:241.4px;top:194px;width:767.6px;height:16.6px;background:#f0f0f0;"></div>
<div style="left:241.4px;top:210.6px;width:15.9px;height:305.2px;background:#f0f0f0;"></div>
<div style="left:297.2px;top:194px;width:497.6px;height:16.6px;background:#7db9e9;"></div>
<div style="left:257.6px;top:210.6px;width:537.2px;height:12.8px;background:#dee6f2;"></div>
<div style="left:257.6px;top:236.2px;width:537.2px;height:12.8px;background:#dee6f2;"></div>
<div style="left:257.6px;top:261.8px;width:537.2px;height:12.8px;background:#dee6f2;"></div>
<div style="left:257.6px;top:287.4px;width:537.2px;height:12.8px;background:#dee6f2;"></div>
<div style="left:257.6px;top:313.0px;width:537.2px;height:12.8px;background:#dee6f2;"></div>
<div style="left:241.8px;top:338.3px;width:15.6px;height:13.1px;background:#7db9e9;border:.7px solid #3c8fd6;box-sizing:border-box"></div>
<div style="left:257.6px;top:338.6px;width:39.8px;height:12.8px;background:#b9d5f0;"></div>
<div style="left:297.6px;top:338.4px;width:497.2px;height:13.2px;background:#7db9e9;border:.9px solid #2d7fd0;box-sizing:border-box"></div>
<div style="left:795px;top:223.1px;width:214px;height:0.7px;background:#f3f3f3;"></div>
<div style="left:242px;top:223.0px;width:15.3px;height:0.8px;background:#b2b2b2;"></div>
<div style="left:795px;top:235.9px;width:214px;height:0.7px;background:#f3f3f3;"></div>
<div style="left:242px;top:235.8px;width:15.3px;height:0.8px;background:#b2b2b2;"></div>
<div style="left:795px;top:248.7px;width:214px;height:0.7px;background:#f3f3f3;"></div>
<div style="left:242px;top:248.6px;width:15.3px;height:0.8px;background:#b2b2b2;"></div>
<div style="left:795px;top:261.5px;width:214px;height:0.7px;background:#f3f3f3;"></div>
<div style="left:242px;top:261.4px;width:15.3px;height:0.8px;background:#b2b2b2;"></div>
<div style="left:795px;top:274.3px;width:214px;height:0.7px;background:#f3f3f3;"></div>
<div style="left:242px;top:274.2px;width:15.3px;height:0.8px;background:#b2b2b2;"></div>
<div style="left:795px;top:287.1px;width:214px;height:0.7px;background:#f3f3f3;"></div>
<div style="left:242px;top:287.0px;width:15.3px;height:0.8px;background:#b2b2b2;"></div>
<div style="left:795px;top:299.9px;width:214px;height:0.7px;background:#f3f3f3;"></div>
<div style="left:242px;top:299.8px;width:15.3px;height:0.8px;background:#b2b2b2;"></div>
<div style="left:795px;top:312.7px;width:214px;height:0.7px;background:#f3f3f3;"></div>
<div style="left:242px;top:312.6px;width:15.3px;height:0.8px;background:#b2b2b2;"></div>
<div style="left:795px;top:325.5px;width:214px;height:0.7px;background:#f3f3f3;"></div>
<div style="left:242px;top:325.4px;width:15.3px;height:0.8px;background:#b2b2b2;"></div>
<div style="left:795px;top:338.3px;width:214px;height:0.7px;background:#f3f3f3;"></div>
<div style="left:242px;top:338.2px;width:15.3px;height:0.8px;background:#b2b2b2;"></div>
<div style="left:795px;top:351.1px;width:214px;height:0.7px;background:#f3f3f3;"></div>
<div style="left:242px;top:351.0px;width:15.3px;height:0.8px;background:#b2b2b2;"></div>
<div style="left:257.6px;top:363.9px;width:751.4px;height:0.7px;background:#f3f3f3;"></div>
<div style="left:242px;top:363.8px;width:15.3px;height:0.8px;background:#b2b2b2;"></div>
<div style="left:257.6px;top:376.7px;width:751.4px;height:0.7px;background:#f3f3f3;"></div>
<div style="left:242px;top:376.6px;width:15.3px;height:0.8px;background:#b2b2b2;"></div>
<div style="left:257.6px;top:389.5px;width:751.4px;height:0.7px;background:#f3f3f3;"></div>
<div style="left:242px;top:389.4px;width:15.3px;height:0.8px;background:#b2b2b2;"></div>
<div style="left:257.6px;top:402.3px;width:751.4px;height:0.7px;background:#f3f3f3;"></div>
<div style="left:242px;top:402.2px;width:15.3px;height:0.8px;background:#b2b2b2;"></div>
<div style="left:257.6px;top:415.1px;width:751.4px;height:0.7px;background:#f3f3f3;"></div>
<div style="left:242px;top:415.0px;width:15.3px;height:0.8px;background:#b2b2b2;"></div>
<div style="left:257.6px;top:427.9px;width:751.4px;height:0.7px;background:#f3f3f3;"></div>
<div style="left:242px;top:427.8px;width:15.3px;height:0.8px;background:#b2b2b2;"></div>
<div style="left:257.6px;top:440.7px;width:751.4px;height:0.7px;background:#f3f3f3;"></div>
<div style="left:242px;top:440.6px;width:15.3px;height:0.8px;background:#b2b2b2;"></div>
<div style="left:257.6px;top:453.5px;width:751.4px;height:0.7px;background:#f3f3f3;"></div>
<div style="left:242px;top:453.4px;width:15.3px;height:0.8px;background:#b2b2b2;"></div>
<div style="left:257.6px;top:466.3px;width:751.4px;height:0.7px;background:#f3f3f3;"></div>
<div style="left:242px;top:466.2px;width:15.3px;height:0.8px;background:#b2b2b2;"></div>
<div style="left:257.6px;top:479.1px;width:751.4px;height:0.7px;background:#f3f3f3;"></div>
<div style="left:242px;top:479.0px;width:15.3px;height:0.8px;background:#b2b2b2;"></div>
<div style="left:257.6px;top:491.9px;width:751.4px;height:0.7px;background:#f3f3f3;"></div>
<div style="left:242px;top:491.8px;width:15.3px;height:0.8px;background:#b2b2b2;"></div>
<div style="left:257.6px;top:504.7px;width:751.4px;height:0.7px;background:#f3f3f3;"></div>
<div style="left:242px;top:504.6px;width:15.3px;height:0.8px;background:#b2b2b2;"></div>
<div style="left:297px;top:210.6px;width:0.7px;height:305.2px;background:rgba(240,240,240,.9);"></div>
<div style="left:794.6px;top:351.4px;width:0.7px;height:164.4px;background:#f1f1f1;"></div>
<div style="left:794.6px;top:210.6px;width:0.6px;height:128.0px;background:#f3f3f3;"></div>
<div style="left:794.3px;top:194px;width:0.6px;height:16.6px;background:#5b9ad6;"></div>
<div style="left:795px;top:210.2px;width:214px;height:0.6px;background:#e5e5e5;"></div>
<div style="left:241.4px;top:210.1px;width:15.9px;height:0.9px;background:#a8a8a8;"></div>
<div style="left:257.8px;top:210.0px;width:39.4px;height:0;border-top:.8px dotted #c3ccd6"></div>
<div style="left:257px;top:194.6px;width:0.8px;height:321.2px;background:#aaaaaa;"></div>
<div style="left:297.2px;top:210.2px;width:497.6px;height:0.6px;background:#9cb9d4;"></div>
<svg style="left:261.2px;top:198.6px" width="8.4" height="7" viewBox="0 0 8.4 7"><path d="M.2 1h1.400M.9.200V3M2.400.300h1M2.900.300V2.800" stroke="#6fb2e8" stroke-width=".6" fill="none"/><rect x="3.800" y="2.200" width="4.200" height="4.600" rx=".6" fill="#2b8ad6"/><path d="M5.100 3v3M6.700 3v3" stroke="#cfe6fa" stroke-width=".6"/></svg>
<span class="t" style="left:271.25px;top:197.5px;color:#444;transform:scaleX(0.778);">_id</span>
<svg style="left:286.8px;top:198.2px" width="8.4" height="7" viewBox="0 0 8.4 7"><path d="M0 .2H4.800L3 2.600V5.200L1.800 4.400V2.600Z" fill="#2b8ad6"/><path d="M6.600.400V2.200M6.600 4.200V6.200" stroke="#2b8ad6" stroke-width="1.100"/><path d="M5.400 1.600L6.600.200 7.800 1.600M5.400 5L6.600 6.400 7.800 5" fill="#2b8ad6"/></svg>
<svg style="left:301.3px;top:198.8px" width="7.6" height="6.8" viewBox="0 0 7.6 6.8"><path d="M1.400.300H4.600L6 1.700V4" fill="none" stroke="#5aa3e0" stroke-width=".6"/><rect x=".2" y="2.800" width="7.200" height="2.400" fill="#5aa3e0"/><path d="M1.400 5.200V6.500H6V5.200" fill="none" stroke="#5aa3e0" stroke-width=".6"/></svg>
<span class="t" style="left:311.25px;top:197.5px;color:#2f3b46;transform:scaleX(0.893);">flow_document</span>
<svg style="left:785px;top:197.6px" width="8.4" height="7.6" viewBox="0 0 8.4 7.6"><path d="M.3.500H4.500L2.900 2.700V5.600L1.900 5V2.700Z" fill="none" stroke="#3f93dc" stroke-width=".5"/><path d="M6.600 1.200V6" stroke="#2d86d3" stroke-width=".6" stroke-dasharray="1.200 .8"/><path d="M5.600 2L6.600.500 7.600 2ZM5.600 5.400L6.600 7 7.600 5.400Z" fill="#2079cc"/></svg>
<span class="t" style="left:243.8px;top:212.7px;color:#333;transform:scaleX(0.850);">1</span>
<span class="t" style="right:730.4px;top:212.7px;color:#444;transform-origin:100% 50%;transform:scaleX(0.850);">1</span>
<span class="t" style="left:301px;top:212.7px;color:#444;transform:scaleX(0.882);">{"_id":1,"_meta":{"uuid":"dccf8fe4-c344-11ed-8401-13525ab57fb4"},"date":"2014-03-01T08:00:00Z","item":"abc","price":10,"quantity":2}</span>
<span class="t" style="left:243.8px;top:225.5px;color:#333;transform:scaleX(0.850);">2</span>
<span class="t" style="right:730.4px;top:225.5px;color:#444;transform-origin:100% 50%;transform:scaleX(0.850);">2</span>
<span class="t" style="left:301px;top:225.5px;color:#444;transform:scaleX(0.883);">{"_id":2,"_meta":{"uuid":"dccf8fe4-c344-11ed-8801-13525ab57fb4"},"date":"2014-03-01T09:00:00Z","item":"jkl","price":20,"quantity":1}</span>
<span class="t" style="left:243.8px;top:238.3px;color:#333;transform:scaleX(0.850);">3</span>
<span class="t" style="right:730.4px;top:238.3px;color:#444;transform-origin:100% 50%;transform:scaleX(0.850);">3</span>
<span class="t" style="left:301px;top:238.3px;color:#444;transform:scaleX(0.881);">{"_id":3,"_meta":{"uuid":"dccf8fe4-c344-11ed-8c01-13525ab57fb4"},"date":"2014-03-15T09:00:00Z","item":"xyz","price":5,"quantity":10}</span>
<span class="t" style="left:243.8px;top:251.1px;color:#333;transform:scaleX(0.850);">4</span>
<span class="t" style="right:730.4px;top:251.1px;color:#444;transform-origin:100% 50%;transform:scaleX(0.850);">4</span>
<span class="t" style="left:301px;top:251.1px;color:#444;transform:scaleX(0.879);">{"_id":4,"_meta":{"uuid":"dccf8fe4-c344-11ed-9001-13525ab57fb4"},"date":"2014-04-04T11:21:39.736Z","item":"xyz","price":5,"quantity":20}</span>
<span class="t" style="left:243.8px;top:263.9px;color:#333;transform:scaleX(0.850);">5</span>
<span class="t" style="right:730.4px;top:263.9px;color:#444;transform-origin:100% 50%;transform:scaleX(0.850);">5</span>
<span class="t" style="left:301px;top:263.9px;color:#444;transform:scaleX(0.880);">{"_id":5,"_meta":{"uuid":"dccf8fe4-c344-11ed-9401-13525ab57fb4"},"date":"2014-04-04T21:23:13.331Z","item":"abc","price":10,"quantity":10}</span>
<span class="t" style="left:243.8px;top:276.7px;color:#333;transform:scaleX(0.850);">6</span>
<span class="t" style="right:730.4px;top:276.7px;color:#444;transform-origin:100% 50%;transform:scaleX(0.850);">6</span>
<span class="t" style="left:301px;top:276.7px;color:#444;transform:scaleX(0.882);">{"_id":6,"_meta":{"uuid":"dccf8fe4-c344-11ed-9801-13525ab57fb4"},"date":"2015-06-04T05:08:13Z","item":"def","price":7.5,"quantity":5}</span>
<span class="t" style="left:243.8px;top:289.5px;color:#333;transform:scaleX(0.850);">7</span>
<span class="t" style="right:730.4px;top:289.5px;color:#444;transform-origin:100% 50%;transform:scaleX(0.850);">7</span>
<span class="t" style="left:301px;top:289.5px;color:#444;transform:scaleX(0.882);">{"_id":7,"_meta":{"uuid":"dccf8fe4-c344-11ed-9c01-13525ab57fb4"},"date":"2015-09-10T08:43:00Z","item":"def","price":7.5,"quantity":10}</span>
<span class="t" style="left:243.8px;top:302.3px;color:#333;transform:scaleX(0.850);">8</span>
<span class="t" style="right:730.4px;top:302.3px;color:#444;transform-origin:100% 50%;transform:scaleX(0.850);">8</span>
<span class="t" style="left:301px;top:302.3px;color:#444;transform:scaleX(0.882);">{"_id":8,"_meta":{"uuid":"dccf8fe4-c344-11ed-a001-13525ab57fb4"},"date":"2016-02-06T20:20:13Z","item":"abc","price":10,"quantity":5}</span>
<span class="t" style="left:243.8px;top:315.1px;color:#333;transform:scaleX(0.850);">9</span>
<span class="t" style="right:730.4px;top:315.1px;color:#444;transform-origin:100% 50%;transform:scaleX(0.850);">9</span>
<span class="t" style="left:301px;top:315.1px;color:#444;transform:scaleX(0.881);">{"_id":9,"_meta":{"uuid":"fe1ac56c-c3a8-11ed-8401-13525ab57fb4"},"date":"2016-03-01T08:00:00Z","item":"hjy","price":50,"quantity":3}</span>
<span class="t" style="left:243.8px;top:327.9px;color:#333;transform:scaleX(0.850);">10</span>
<span class="t" style="right:730.4px;top:327.9px;color:#444;transform-origin:100% 50%;transform:scaleX(0.850);">10</span>
<span class="t" style="left:301px;top:327.9px;color:#444;transform:scaleX(0.881);">{"_id":10,"_meta":{"uuid":"18be4c77-c3ab-11ed-8401-13525ab57fb4"},"date":"2016-03-01T08:00:00Z","item":"hjy","price":4,"quantity":3}</span>
<span class="t" style="left:243.8px;top:340.7px;color:#1f2d3a;transform:scaleX(0.850);">11</span>
<span class="t" style="right:730.4px;top:340.7px;color:#444;transform-origin:100% 50%;transform:scaleX(0.850);">11</span>
<span class="t" style="left:301px;top:340.7px;color:#fff;transform:scaleX(0.888);">{"_id":11,"_meta":{"deleted":true,"uuid":"b73f7c4e-c41b-11ed-8401-67568cdaff90"}}</span>
<div style="left:228px;top:194.4px;width:12.8px;height:34.6px;background:#e3e3e3;border:.7px solid #c6c6c6;box-sizing:border-box;border-radius:1px"></div>
<span class="t" style="left:233.9px;top:207.2px;color:#444;transform-origin:50% 50%;transform:translate(-50%,-50%) rotate(-90deg) scaleX(0.776);">Grid</span>
<span class="t" style="left:233.9px;top:242.5px;color:#444;transform-origin:50% 50%;transform:translate(-50%,-50%) rotate(-90deg) scaleX(0.836);">Text</span>
<span class="t" style="left:233.8px;top:488.7px;color:#444;transform-origin:50% 50%;transform:translate(-50%,-50%) rotate(-90deg) scaleX(0.862);">Record</span>
<span class="t" style="left:1015.6px;top:218.8px;color:#555;transform-origin:50% 50%;transform:translate(-50%,-50%) rotate(90deg) scaleX(0.785);">Panels</span>
<svg style="left:229.7px;top:217.2px" width="7.4" height="7.4" viewBox="0 0 7.4 7.4"><rect x=".4" y=".4" width="6.600" height="6.600" fill="#eaf3fc" stroke="#6fb2e8" stroke-width=".7"/><path d="M.4 2.600H7M.4 4.800H7M2.600.400V7M4.800.400V7" stroke="#6fb2e8" stroke-width=".6"/></svg>
<svg style="left:230px;top:252.8px" width="6.6" height="7.4" viewBox="0 0 6.6 7.4"><path d="M2.400 2.400V6.800M.6 2.400H4.600" stroke="#6fb2e8" stroke-width=".8" transform="rotate(-90 3.300 3.700)"/><path d="M2.600 5.400L3.600 7 4.600 5.400Z" fill="#2b8ad6"/></svg>
<svg style="left:229.4px;top:503.2px" width="7.8" height="7.4" viewBox="0 0 7.8 7.4"><path d="M.4 2.200H5.600L6.600 3V7H.4Z" fill="#fff" stroke="#6fb2e8" stroke-width=".7"/><circle cx="6.200" cy="1.600" r="1.500" fill="#2b8ad6"/></svg>
<svg style="left:1013px;top:198.5px" width="8" height="7.8" viewBox="0 0 8 7.8"><rect x="1.400" y=".3" width="6.200" height="5.400" fill="#2b8ad6"/><rect x="2.200" y="1.800" width="4.600" height="3.200" fill="#cfe6fa"/><path d="M1.800 4.600L3.600 6.400 1.800 7.800 0 6.400Z" fill="#2b8ad6"/></svg>
<svg style="left:1010px;top:239px" width="9.2" height="8.8" viewBox="0 0 9.2 8.8"><circle cx="2.200" cy="2" r="1.700" fill="#2b8ad6"/><circle cx="2.200" cy="2" r=".6" fill="#bfe0f8"/><circle cx="2.200" cy="6.600" r="1.700" fill="#2b8ad6"/><circle cx="2.200" cy="6.600" r=".6" fill="#bfe0f8"/><circle cx="7" cy="2" r="1.600" fill="#e08a2a"/><circle cx="7" cy="2" r=".5" fill="#fbe3c6"/><rect x="5.500" y="5.100" width="3" height="3" fill="#e08a2a"/><rect x="6.400" y="6" width="1.200" height="1.200" fill="#fbe3c6"/></svg>
<svg style="left:1010.4px;top:251px" width="8.4" height="8.4" viewBox="0 0 8.4 8.4"><circle cx="4.200" cy="4.200" r="3.700" fill="none" stroke="#2b8ad6" stroke-width=".8"/><path d="M3.200 2.800V5.600M5.200 2.800V5.600" stroke="#6fb2e8" stroke-width=".7"/></svg>
<svg style="left:1010.4px;top:263px" width="8.4" height="8.2" viewBox="0 0 8.4 8.2"><rect x=".4" y=".4" width="7.600" height="7.200" rx=".8" fill="#fff" stroke="#2b8ad6" stroke-width=".8"/><rect x=".4" y=".4" width="7.600" height="2" fill="#2b8ad6"/><path d="M2 4.400h1.400M4.600 4.400h1.800M2 6h1.400M4.600 6h1.800" stroke="#6fb2e8" stroke-width=".8"/></svg>
<svg style="left:1010.4px;top:274.8px" width="8.4" height="8.2" viewBox="0 0 8.4 8.2"><rect x=".3" y="2.800" width="7.800" height="5" fill="#2b8ad6"/><rect x="3.200" y="0" width="2" height="7.800" fill="#e08a2a"/><path d="M.3 5.200H8.100" stroke="#cfe6fa" stroke-width=".5"/></svg>
<svg style="left:1010.4px;top:286.4px" width="8.4" height="8" viewBox="0 0 8.4 8"><rect x=".3" y=".3" width="7.800" height="5.800" fill="#fff" stroke="#2b8ad6" stroke-width=".7"/><rect x=".3" y=".3" width="7.800" height="2.200" fill="#2b8ad6"/><path d="M4.400 6.600H7.200V4.600" fill="none" stroke="#2b8ad6" stroke-width=".7"/><path d="M.6 7.200H3.200" stroke="#6fb2e8" stroke-width=".7"/></svg>
<svg style="left:245px;top:519px" width="7.8" height="7.8" viewBox="0 0 7.8 7.8"><circle cx="3.900" cy="3.900" r="3.500" fill="none" stroke="#a6a6a6" stroke-width=".7"/><path d="M2.200 4L3.500 5.200 5.700 2.800" fill="none" stroke="#a6a6a6" stroke-width=".7"/></svg>
<span class="t" style="left:255.6px;top:517.9px;color:#a8a8a8;transform:scaleX(0.775);">Save</span>
<svg style="left:279px;top:519.4px" width="6.8" height="6.8" viewBox="0 0 6.8 6.8"><rect x=".4" y=".4" width="6" height="6" fill="none" stroke="#a6a6a6" stroke-width=".7"/><path d="M2 2L4.800 4.800M4.800 2L2 4.800" stroke="#a6a6a6" stroke-width=".7"/></svg>
<span class="t" style="left:288.75px;top:517.9px;color:#a8a8a8;transform:scaleX(0.794);">Cancel</span>
<svg style="left:318.7px;top:519px" width="7" height="7.8" viewBox="0 0 7 7.8"><path d="M1.800.5H6.600M5.700.5V6.600H1.200M1.200 6.600V5.200" fill="none" stroke="#8f8f8f" stroke-width="1"/><path d="M.3 7.300H4.600" stroke="#8f8f8f" stroke-width=".8"/><path d="M2.600 2.200h2.200M2.600 3.600h2.200M2.600 5h2.200" stroke="#8f8f8f" stroke-width=".6"/></svg>
<span class="t" style="left:328.5px;top:517.9px;color:#a8a8a8;transform:scaleX(0.880);">Script</span>
<div style="left:353.9px;top:517.3px;width:1.1px;height:10.7px;background:#c2c2c2;"></div>
<svg style="left:359.7px;top:519px" width="8.2" height="7.8" viewBox="0 0 8.2 7.8"><path d="M.2.600H7.800" stroke="#8fb5dd" stroke-width="1.100"/><path d="M.2 3.200H7.800M.2 5.800H3.600" stroke="#2b8ad6" stroke-width="1.100"/><path d="M4.200 7.600L7.800 4" stroke="#2b8ad6" stroke-width="1.100"/></svg>
<svg style="left:372.7px;top:519px" width="8.2" height="7.8" viewBox="0 0 8.2 7.8"><path d="M.2.600H7.800" stroke="#8fb5dd" stroke-width="1.100"/><path d="M.2 3.200H3.400M.2 5.800H3.400" stroke="#2b8ad6" stroke-width="1.100"/><path d="M4.200 4.800H8M6.100 2.900V6.700" stroke="#2fa04e" stroke-width="1.100"/></svg>
<svg style="left:385.6px;top:519px" width="8.2" height="7.8" viewBox="0 0 8.2 7.8"><path d="M.2.600H7.800" stroke="#8fb5dd" stroke-width="1.100"/><path d="M.2 3.200H1.600M.2 5.800H1.600" stroke="#2b8ad6" stroke-width="1.100"/><path d="M3.400 2.400C2.400 3.600 2.400 5.800 3.400 7M6.600 2.400C7.600 3.600 7.600 5.800 6.600 7" fill="none" stroke="#2b8ad6" stroke-width=".7"/><path d="M5 3.400V6" stroke="#2fa04e" stroke-width="1.100"/></svg>
<svg style="left:398px;top:519px" width="8.4" height="7.8" viewBox="0 0 8.4 7.8"><path d="M.2.600H7.800" stroke="#8fb5dd" stroke-width="1.100"/><path d="M.2 3.200H3.400M.2 5.800H3.400" stroke="#2b8ad6" stroke-width="1.100"/><path d="M4.200 5H8.400" stroke="#e8872c" stroke-width="1.200"/></svg>
<div style="left:411.2px;top:518.4px;width:0;height:9.0px;border-left:1px dotted #c4c4c4"></div>
<svg style="left:415px;top:519.4px" width="7" height="7" viewBox="0 0 7 7"><path d="M.8 0V7" stroke="#8fb5dd" stroke-width="1.500"/><path d="M6.400.400L2.800 3.500 6.400 6.600" fill="none" stroke="#2b8ad6" stroke-width="1.100"/></svg>
<svg style="left:428.5px;top:519.4px" width="5" height="7" viewBox="0 0 5 7"><path d="M4.400.400L.8 3.500 4.400 6.600" fill="none" stroke="#2b8ad6" stroke-width="1.100"/></svg>
<svg style="left:441.5px;top:519.4px" width="5" height="7" viewBox="0 0 5 7"><path d="M.6.400L4.200 3.500.6 6.600" fill="none" stroke="#8e8e8e" stroke-width="1.100"/></svg>
<svg style="left:452.5px;top:519.4px" width="6.6" height="7" viewBox="0 0 6.6 7"><path d="M.6.400L4.200 3.500.6 6.600" fill="none" stroke="#8e8e8e" stroke-width="1.100"/><path d="M5.700 0V7" stroke="#a6a6a6" stroke-width="1.400"/></svg>
<div style="left:462.7px;top:517.3px;width:1.1px;height:10.7px;background:#c6c6c6;"></div>
<svg style="left:468px;top:519.2px" width="8.2" height="7.6" viewBox="0 0 8.2 7.6"><circle cx="5.800" cy="1.900" r="1.500" fill="none" stroke="#ababab" stroke-width=".7"/><path d="M.6 3.400C.6 6.600 3.600 6.600 3.600 3.800" fill="none" stroke="#ababab" stroke-width=".7"/><path d="M4.400 2.600V6" stroke="#ababab" stroke-width=".6"/></svg>
<svg style="left:480.4px;top:519.2px" width="7.8" height="7.6" viewBox="0 0 7.8 7.6"><g fill="none" stroke="#ababab" stroke-width=".7"><path d="M.4 2.200V.4H2.200M5.600.400H7.400V2.200M7.400 5.400V7.200H5.600M2.200 7.200H.4V5.400"/><rect x="2.600" y="2.400" width="2.600" height="2.800"/></g></svg>
<div style="left:493.2px;top:518.4px;width:0;height:9.0px;border-left:1px dotted #c4c4c4"></div>
<svg style="left:499px;top:519px" width="7.4" height="7.8" viewBox="0 0 7.4 7.8"><path d="M3.700.600V5" stroke="#2b8ad6" stroke-width="1.100"/><path d="M1.900 2.400L3.700.400 5.500 2.400Z" fill="#2b8ad6"/><path d="M.4 5.200V7.300H7V5.200" fill="none" stroke="#6fb2e8" stroke-width=".8"/></svg>
<div style="left:511.2px;top:518.4px;width:0;height:9.0px;border-left:1px dotted #c4c4c4"></div>
<svg style="left:515px;top:518.9px" width="8" height="8" viewBox="0 0 8 8"><g transform="translate(4 4)" fill="#2b8ad6"><rect x="-.9" y="-4" width="1.800" height="2" transform="rotate(0)"/><rect x="-.9" y="-4" width="1.800" height="2" transform="rotate(60)"/><rect x="-.9" y="-4" width="1.800" height="2" transform="rotate(120)"/><rect x="-.9" y="-4" width="1.800" height="2" transform="rotate(180)"/><rect x="-.9" y="-4" width="1.800" height="2" transform="rotate(240)"/><rect x="-.9" y="-4" width="1.800" height="2" transform="rotate(300)"/><circle r="3"/></g><circle cx="4" cy="4" r="1.250" fill="#a9d6f7"/></svg>
<div style="left:527.3px;top:516.6px;width:30.7px;height:12.4px;background:#fff;"></div>
<div style="left:527.3px;top:528.7px;width:30.7px;height:0.6px;background:#c6c6c6;"></div>
<span class="t" style="left:530.75px;top:517.9px;color:#444;transform:scaleX(0.848);">200</span>
<svg style="left:561.6px;top:519.4px" width="8.6" height="7.2" viewBox="0 0 8.6 7.2"><path d="M1 3.200V2.600a1.400 1.400 0 0 1 1.400-1.400H6.200M7.600 4V4.600a1.400 1.400 0 0 1-1.400 1.400H2.400" fill="none" stroke="#2fa04e" stroke-width="1"/><path d="M5.600 0L7.800 1.200 5.600 2.600ZM3 4.600L.8 6 3 7.200Z" fill="#2fa04e"/></svg>
<span class="t" style="left:575.5px;top:517.9px;color:#444;transform:scaleX(0.803);">11</span>
<div style="left:588.2px;top:518.4px;width:0;height:9.0px;border-left:1px dotted #c4c4c4"></div>
<span class="t" style="left:593.5px;top:517.9px;color:#444;transform:scaleX(0.807);">Rows: 1</span>
<svg style="left:627.6px;top:519.2px" width="7.4" height="7.6" viewBox="0 0 7.4 7.6"><path d="M2 0V7.600" stroke="#2b8ad6" stroke-width=".7"/><path d="M2.400 1.200H7.200V5.400H2.400Z" fill="#63b7ee"/><path d="M0 3.300H1.200" stroke="#2b8ad6" stroke-width=".8"/></svg>
<span class="t" style="left:639.5px;top:517.9px;color:#444;transform:scaleX(0.874);">11 row(s) fetched - 259ms (11ms fetch), on 2023-03-20 at 09:58</span>
<svg style="left:1011.7px;top:520px" width="7.6" height="7.6" viewBox="0 0 7.6 7.6"><path d="M.4.400H3.200V7.200H.4Z" fill="#2b8ad6"/><path d="M4.400 1.400H6.400L7.400 2.600V6H4.400" fill="none" stroke="#2b8ad6" stroke-width=".9"/></svg>
<div style="left:1009px;top:194px;width:0.6px;height:322px;background:#ececec;"></div>
<div style="left:226.2px;top:529.6px;width:797.8px;height:0.7px;background:#e8e8e8;"></div>
<div style="left:469.4px;top:531.6px;width:0.8px;height:11.4px;background:#d6d6d6;"></div>
<div style="left:490.7px;top:531.6px;width:0.8px;height:11.4px;background:#d6d6d6;"></div>
<div style="left:506.6px;top:531.6px;width:0.8px;height:11.4px;background:#d6d6d6;"></div>
<div style="left:599.2px;top:531.6px;width:0.8px;height:11.4px;background:#d6d6d6;"></div>
<div style="left:687.2px;top:531.6px;width:0.8px;height:11.4px;background:#d6d6d6;"></div>
<div style="left:775px;top:531.6px;width:0.8px;height:11.4px;background:#d6d6d6;"></div>
<div style="left:834px;top:532.5px;width:0;height:10.0px;border-left:1px dotted #c8c8c8"></div>
<span class="t" style="left:473.5px;top:531.6px;color:#444;transform:scaleX(0.728);">CST</span>
<span class="t" style="left:494.5px;top:531.6px;color:#444;transform:scaleX(0.874);">en</span>
<span class="t" style="left:510px;top:531.6px;color:#444;transform:scaleX(0.943);">Writable</span>
<span class="t" style="left:603.25px;top:531.6px;color:#444;transform:scaleX(0.852);">Smart Insert</span>
<span class="t" style="left:691.8px;top:531.6px;color:#444;transform:scaleX(0.817);">3 : 21 : 24</span>
<span class="t" style="left:781px;top:531.6px;color:#444;transform:scaleX(0.800);">Sel: 0 | 0</span>
</body></html>
